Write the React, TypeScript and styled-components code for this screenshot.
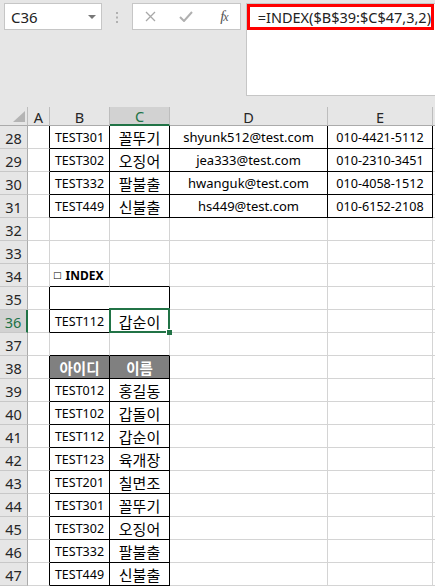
import styled, { createGlobalStyle, css } from 'styled-components';

const GlobalStyle = createGlobalStyle`
  html, body { margin: 0; padding: 0; background: #fff; }
  body { font-family: "Noto Sans", "Noto Sans CJK KR", sans-serif; }
`;

const GREEN = '#217346';
const GRID = '#d4d4d4';
const COL_WIDTHS = [28, 22, 60, 60, 158, 105, 60];
// the last column only peeks in at the right edge, so its letter stays hidden
const LETTERS = ['A', 'B', 'C', 'D', 'E', ''];
const FIRST_ROW = 28;
const LAST_ROW = 47;
const SELECTED = { row: 36, col: 2 };

type Kind = 'id' | 'ko' | 'mail' | 'tel' | 'label' | 'th' | 'blank';
type CellData = { text?: string; kind: Kind; span?: number };

const list = [
  ['TEST012', '홍길동'],
  ['TEST102', '갑돌이'],
  ['TEST112', '갑순이'],
  ['TEST123', '육개장'],
  ['TEST201', '칠면조'],
  ['TEST301', '꼴뚜기'],
  ['TEST302', '오징어'],
  ['TEST332', '팔불출'],
  ['TEST449', '신불출'],
];

const contacts = [
  ['TEST301', '꼴뚜기', 'shyunk512@test.com', '010-4421-5112'],
  ['TEST302', '오징어', 'jea333@test.com', '010-2310-3451'],
  ['TEST332', '팔불출', 'hwanguk@test.com', '010-4058-1512'],
  ['TEST449', '신불출', 'hs449@test.com', '010-6152-2108'],
];

// cells keyed by "row:col", col 0 = A
const cells: Record<string, CellData> = {};
contacts.forEach((c, i) => {
  const r = 28 + i;
  cells[`${r}:1`] = { text: c[0], kind: 'id' };
  cells[`${r}:2`] = { text: c[1], kind: 'ko' };
  cells[`${r}:3`] = { text: c[2], kind: 'mail' };
  cells[`${r}:4`] = { text: c[3], kind: 'tel' };
});
cells['34:1'] = { text: 'INDEX', kind: 'label' };
cells['35:1'] = { kind: 'blank', span: 2 };
cells['36:1'] = { text: 'TEST112', kind: 'id' };
cells['36:2'] = { text: '갑순이', kind: 'ko' };
cells['38:1'] = { text: '아이디', kind: 'th' };
cells['38:2'] = { text: '이름', kind: 'th' };
list.forEach((l, i) => {
  cells[`${39 + i}:1`] = { text: l[0], kind: 'id' };
  cells[`${39 + i}:2`] = { text: l[1], kind: 'ko' };
});

const boxed = (r: number, c: number) =>
  (r >= 28 && r <= 31 && c >= 1 && c <= 4) ||
  (r >= 35 && r <= 36 && c >= 1 && c <= 2) ||
  (r >= 38 && r <= 47 && c >= 1 && c <= 2);

const Shell = styled.div`
  width: 435px;
  height: 586px;
  overflow: hidden;
  background: #e6e6e6;
`;

const TopBar = styled.div`
  display: flex;
  align-items: flex-start;
  height: 107px;
  padding: 3px 0 0 4px;
  box-sizing: border-box;
`;

const NameBox = styled.div`
  display: flex;
  align-items: center;
  justify-content: space-between;
  width: 101px;
  height: 27px;
  box-sizing: border-box;
  padding: 0 5px 0 6px;
  background: #fff;
  border: 1px solid #c6c6c6;
  font-size: 15px;
  color: #222;
`;

const DropArrow = styled.span`
  width: 0;
  height: 0;
  border-left: 4px solid transparent;
  border-right: 4px solid transparent;
  border-top: 4px solid #777;
`;

const Grip = styled.div`
  display: flex;
  justify-content: center;
  width: 31px;
  padding-top: 9px;
`;

const FxBox = styled.div`
  display: flex;
  align-items: center;
  width: 109px;
  height: 27px;
  box-sizing: border-box;
  background: #fff;
  border: 1px solid #c6c6c6;
`;

const FxSlot = styled.span`
  display: flex;
  align-items: center;
  justify-content: center;
  width: 36px;
  height: 100%;
`;

const FxLabel = styled.span`
  font-family: "Liberation Serif", serif;
  font-style: italic;
  font-size: 15px;
  color: #555;
  letter-spacing: -1px;
  margin-left: 4px;

  & small {
    font-size: 12px;
  }
`;

const FormulaBar = styled.div`
  flex: 1;
  height: 93px;
  margin-left: 5px;
  box-sizing: border-box;
  background: #fff;
  border: 1px solid #c6c6c6;
  border-right: none;
`;

const FormulaText = styled.div`
  height: 26px;
  margin-right: 1px;
  box-sizing: border-box;
  border: 3px solid #ff0000;
  padding-left: 8px;
  display: flex;
  align-items: center;
  white-space: nowrap;
  overflow: hidden;
  font-size: 14.5px;
  color: #222;
`;

const Sheet = styled.div`
  display: grid;
  grid-template-columns: ${COL_WIDTHS.map((w) => `${w}px`).join(' ')};
  grid-template-rows: 19px;
  grid-auto-rows: 23px;
  background: #fff;
`;

const Corner = styled.div`
  position: relative;
  background: #e6e6e6;
  border-right: 1px solid #bdbdbd;
  border-bottom: 1px solid #ababab;

  &::after {
    content: '';
    position: absolute;
    right: 2px;
    bottom: 3px;
    width: 0;
    height: 0;
    border-left: 12px solid transparent;
    border-bottom: 11px solid #b4b4b4;
  }
`;

const ColHead = styled.div<{ $active?: boolean }>`
  display: flex;
  align-items: center;
  justify-content: center;
  box-sizing: border-box;
  background: ${(p) => (p.$active ? '#d2d2d2' : '#e6e6e6')};
  border-right: 1px solid #bdbdbd;
  border-bottom: ${(p) => (p.$active ? `2px solid ${GREEN}` : '1px solid #ababab')};
  font-size: 14.5px;
  color: ${(p) => (p.$active ? GREEN : '#262626')};
  padding-top: 1px;
`;

const RowHead = styled.div<{ $active?: boolean }>`
  display: flex;
  align-items: center;
  justify-content: center;
  box-sizing: border-box;
  background: ${(p) => (p.$active ? '#d2d2d2' : '#e6e6e6')};
  border-right: ${(p) => (p.$active ? `2px solid ${GREEN}` : '1px solid #ababab')};
  border-bottom: 1px solid #c8c8c8;
  font-size: 14.5px;
  color: ${(p) => (p.$active ? GREEN : '#262626')};
  padding-top: 2px;
`;

const kindStyles: Record<Kind, ReturnType<typeof css>> = {
  id: css`
    justify-content: center;
    font-size: 12.5px;
  `,
  ko: css`
    justify-content: center;
    font-family: "Noto Sans CJK KR", sans-serif;
    font-size: 15px;
  `,
  mail: css`
    justify-content: center;
    font-size: 13px;
  `,
  tel: css`
    justify-content: center;
    font-size: 12.6px;
  `,
  label: css`
    justify-content: flex-start;
    padding-left: 3px;
    font-size: 12px;
    font-weight: 700;
    white-space: nowrap;
    overflow: visible;
  `,
  th: css`
    justify-content: center;
    background: #808080;
    color: #fff;
    font-family: "Noto Sans CJK KR", sans-serif;
    font-size: 14.5px;
    font-weight: 700;
  `,
  blank: css``,
};

const Cell = styled.div<{
  $kind: Kind;
  $right: boolean;
  $bottom: boolean;
  $span: number;
  $selected?: boolean;
}>`
  display: flex;
  align-items: center;
  box-sizing: border-box;
  grid-column: span ${(p) => p.$span};
  border-right: 1px solid ${(p) => (p.$right ? '#000' : GRID)};
  border-bottom: 1px solid ${(p) => (p.$bottom ? '#000' : GRID)};
  color: #000;
  ${(p) => kindStyles[p.$kind]}

  ${(p) =>
    p.$selected &&
    css`
      position: relative;
      z-index: 2;

      &::after {
        content: '';
        position: absolute;
        top: -2px;
        left: -1px;
        right: -1px;
        bottom: -1px;
        border: 2px solid ${GREEN};
      }

      &::before {
        content: '';
        position: absolute;
        right: -3px;
        bottom: -3px;
        width: 5px;
        height: 5px;
        background: ${GREEN};
        border-left: 1px solid #fff;
        border-top: 1px solid #fff;
        z-index: 3;
      }
    `}
`;

const Box = styled.span`
  font-family: "DejaVu Sans", sans-serif;
  font-weight: 400;
  font-size: 9px;
  margin-right: 4px;
`;

function SheetRow({ row }: { row: number }) {
  const out = [];
  for (let c = 0; c < LETTERS.length; c++) {
    const data = cells[`${row}:${c}`] ?? { kind: 'blank' as Kind };
    const span = data.span ?? 1;
    const last = c + span - 1;
    const right = boxed(row, last) || boxed(row, last + 1);
    const bottom = boxed(row, c) || boxed(row + 1, c);
    out.push(
      <Cell
        key={c}
        $kind={data.kind}
        $right={right}
        $bottom={bottom}
        $span={span}
        $selected={row === SELECTED.row && c === SELECTED.col}
      >
        {data.kind === 'label' && <Box>□</Box>}
        {data.text}
      </Cell>
    );
    c = last;
  }
  return (
    <>
      <RowHead $active={row === SELECTED.row}>{row}</RowHead>
      {out}
    </>
  );
}

export default function App() {
  const rows = [];
  for (let r = FIRST_ROW; r <= LAST_ROW; r++) rows.push(r);
  return (
    <>
      <GlobalStyle />
      <Shell>
        <TopBar>
          <NameBox>
            C36
            <DropArrow />
          </NameBox>
          <Grip>
            <svg width="2" height="11" viewBox="0 0 2 11">
              <rect x="0" y="0" width="2" height="2" fill="#b0b0b0" />
              <rect x="0" y="4.5" width="2" height="2" fill="#b0b0b0" />
              <rect x="0" y="9" width="2" height="2" fill="#b0b0b0" />
            </svg>
          </Grip>
          <FxBox>
            <FxSlot>
              <svg width="11" height="11" viewBox="0 0 11 11">
                <path d="M1 1 L10 10 M10 1 L1 10" stroke="#a8a8a8" strokeWidth="1.3" />
              </svg>
            </FxSlot>
            <FxSlot>
              <svg width="14" height="11" viewBox="0 0 14 11">
                <path d="M1 6 L5 10 L13 1" stroke="#b0b0b0" strokeWidth="2" fill="none" />
              </svg>
            </FxSlot>
            <FxSlot>
              <FxLabel>
                f<small>x</small>
              </FxLabel>
            </FxSlot>
          </FxBox>
          <FormulaBar>
            <FormulaText>=INDEX($B$39:$C$47,3,2)</FormulaText>
          </FormulaBar>
        </TopBar>
        <Sheet>
          <Corner />
          {LETTERS.map((l, i) => (
            <ColHead key={i} $active={i === SELECTED.col}>
              {l}
            </ColHead>
          ))}
          {rows.map((r) => (
            <SheetRow key={r} row={r} />
          ))}
        </Sheet>
      </Shell>
    </>
  );
}
